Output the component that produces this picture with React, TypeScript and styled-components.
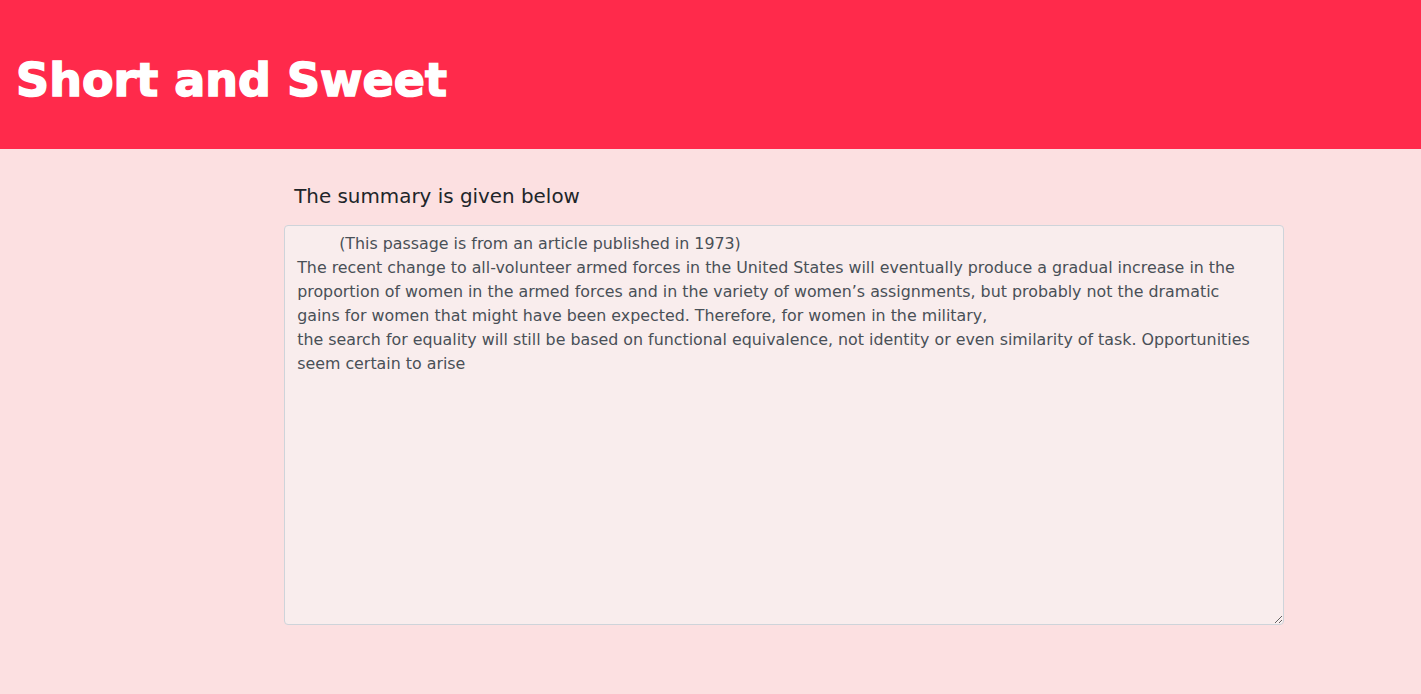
import React from "react";
import styled, { createGlobalStyle } from "styled-components";

const Global = createGlobalStyle`
  html, body { margin: 0; padding: 0; background: #fce0e1; }
  body { font-family: "DejaVu Sans", "Noto Sans", sans-serif; min-height: 694px; }
`;

const Header = styled.header`
  background: #ff2a4b;
  height: 149px;
  padding: 52px 16px 0;
  box-sizing: border-box;
`;

const Title = styled.h1`
  margin: 0;
  color: #ffffff;
  font-family: "DejaVu Sans", sans-serif;
  font-weight: 900;
  font-size: 46px;
  line-height: 56px;
  letter-spacing: 0;
  -webkit-text-stroke: 1.5px #ffffff;
`;

const Main = styled.main`
  margin-left: 20%;
  width: 1000px;
  padding-top: 32px;
  display: flex;
  flex-direction: column;
`;

const Label = styled.label`
  display: block;
  padding-left: 10px;
  font-family: "DejaVu Sans", sans-serif;
  font-size: 19.9px;
  line-height: 30px;
  color: #212529;
  margin-top: 1px;
  margin-bottom: 13px;
`;

const Summary = styled.textarea`
  box-sizing: border-box;
  width: 1000px;
  height: 400px;
  margin: 0;
  padding: 6px 20px 6px 12px;
  border: 1px solid #ced4da;
  border-radius: 4px;
  background: #f9eded;
  color: #495057;
  font-family: "DejaVu Sans", sans-serif;
  font-size: 15.85px;
  line-height: 24px;
  tab-size: 42px;
  -moz-tab-size: 42px;
  outline: none;
`;

const text =
  "\t(This passage is from an article published in 1973)\n" +
  "The recent change to all-volunteer armed forces in the United States will eventually produce a gradual increase in the proportion of women in the armed forces and in the variety of women\u2019s assignments, but probably not the dramatic gains for women that might have been expected. Therefore, for women in the military,\n" +
  "the search for equality will still be based on functional equivalence, not identity or even similarity of task. Opportunities seem certain to arise";

export default function App() {
  return (
    <>
      <Global />
      <Header>
        <Title>Short and Sweet</Title>
      </Header>
      <Main>
        <Label htmlFor="summary">The summary is given below</Label>
        <Summary id="summary" defaultValue={text} readOnly />
      </Main>
    </>
  );
}
